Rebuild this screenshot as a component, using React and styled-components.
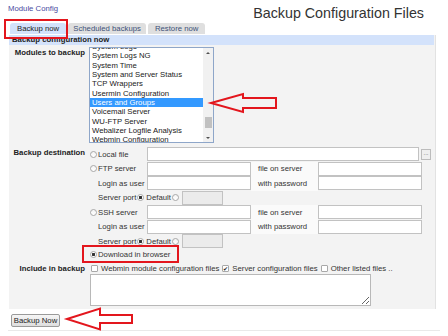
import React from "react";
import styled, { createGlobalStyle } from "styled-components";

const GlobalStyle = createGlobalStyle`
  body {
    margin: 0;
    background: #fff;
    font-family: "Liberation Sans", Arial, sans-serif;
    font-size: 7.75px;
    color: #333;
  }
  * { box-sizing: border-box; }
`;

const RED = "#e3161d";

const Page = styled.div`
  position: relative;
  width: 448px;
  height: 336px;
  overflow: hidden;
`;

const TopBar = styled.div`
  display: flex;
  justify-content: space-between;
  align-items: flex-start;
  height: 23px;
  padding: 0 24px 0 8px;
`;

const ModuleLink = styled.a`
  margin-top: 4px;
  line-height: 9px;
  color: #4a4aa0;
  text-decoration: none;
`;

const Title = styled.div`
  margin-top: 5px;
  font-size: 14.3px;
  line-height: 16px;
  color: #333;
`;

const Tabs = styled.div`
  display: flex;
  gap: 2px;
  margin-left: 10px;
  height: 12px;
`;

const Tab = styled.div`
  position: relative;
  height: 11px;
  margin-top: 0;
  padding: 0 ${(p) => p.$pad}px;
  line-height: 11px;
  border-radius: 3px 3px 0 0;
  background: ${(p) => (p.$active ? "#d3e2fb" : "#dfdfdf")};
  color: ${(p) => (p.$active ? "#222" : "#3d5178")};
  white-space: nowrap;
  ${(p) =>
    p.$marked &&
    `
    &::after {
      content: "";
      position: absolute;
      left: -6px;
      right: -2px;
      top: -4px;
      bottom: -5px;
      border: 2px solid ${RED};
    }
  `}
`;

const Panel = styled.div`
  margin-left: 9px;
  width: 427px;
  background: #f3f3f3;
  border-right: 1px solid #e2e2e2;
  padding-bottom: 3px;
`;

const PanelHeader = styled.div`
  height: 10px;
  line-height: 10px;
  margin-right: 1px;
  padding-left: 3px;
  background: #d3e2fb;
  font-weight: bold;
  color: #222;
`;

const FormGrid = styled.div`
  display: grid;
  grid-template-columns: 80px 1fr;
  align-items: start;
`;

const Label = styled.div`
  text-align: right;
  padding-right: 4px;
  font-weight: bold;
  color: #222;
  white-space: nowrap;
  line-height: ${(p) => p.$lh || 9}px;
  margin-top: ${(p) => p.$mt || 0}px;
`;

const Cell = styled.div`
  margin-top: ${(p) => p.$mt || 0}px;
`;

const ListBox = styled.div`
  display: flex;
  width: 125px;
  height: 96px;
  border: 1px solid #8ea6c9;
  background: #fff;
`;

const List = styled.div`
  flex: 1;
  overflow: hidden;
`;

const ListInner = styled.div`
  margin-top: -6px;
`;

const Item = styled.div`
  height: 9.33px;
  line-height: 9.33px;
  padding-left: 2px;
  white-space: nowrap;
  background: ${(p) => (p.$selected ? "#3399ff" : "transparent")};
  color: ${(p) => (p.$selected ? "#fff" : "#222")};
`;

const ScrollBar = styled.div`
  display: flex;
  flex-direction: column;
  align-items: center;
  width: 10px;
  background: #f1f1f1;
`;

const ScrollArrow = styled.div`
  height: 9px;
  display: flex;
  align-items: center;
  justify-content: center;
  &::before {
    content: "";
    border-left: 2px solid transparent;
    border-right: 2px solid transparent;
    ${(p) => (p.$down ? "border-top" : "border-bottom")}: 2px solid #505050;
  }
`;

const Thumb = styled.div`
  width: 7px;
  height: 11px;
  margin-top: 60px;
  background: #c1c1c1;
`;

const Spacer = styled.div`
  flex: 1;
`;

const DestRow = styled.div`
  display: flex;
  align-items: center;
  height: ${(p) => p.$h || 14.5}px;
`;

const ChoiceCell = styled.div`
  display: flex;
  align-items: center;
  width: 58px;
  padding-left: ${(p) => (p.$indent ? 9 : 1)}px;
  white-space: nowrap;
`;

const SideLabel = styled.div`
  align-self: stretch;
  display: flex;
  align-items: center;
  width: 67px;
  padding-left: 7px;
  background: #fafafa;
  white-space: nowrap;
`;

const TextInput = styled.input`
  width: ${(p) => p.$w}px;
  height: 14px;
  padding: 0;
  margin: 0;
  border: 1px solid #c2c2c2;
  background: ${(p) => (p.disabled ? "#ebebeb" : "#fff")};
  font: inherit;
`;

const DotsButton = styled.div`
  width: 10px;
  height: 11px;
  margin-left: 2px;
  border: 1px solid #bcbcbc;
  background: #efefef;
  font-size: 6px;
  line-height: 7px;
  text-align: center;
  color: #555;
`;

const Radio = styled.span`
  display: inline-block;
  flex: none;
  width: 7px;
  height: 7px;
  margin-right: ${(p) => p.$mr ?? 1}px;
  border-radius: 50%;
  border: 1px solid #a8a8a8;
  background: ${(p) =>
    p.$checked
      ? "radial-gradient(circle, #333 0 1.4px, #fff 1.6px)"
      : "linear-gradient(#f4f4f4, #fff)"};
`;

const Check = styled.span`
  display: inline-flex;
  align-items: center;
  justify-content: center;
  flex: none;
  width: 7px;
  height: 7px;
  border: 1px solid #a8a8a8;
  border-radius: 1px;
  background: #fff;
  font-size: 6px;
  line-height: 1;
  color: #222;
`;

const PortRow = styled.div`
  display: flex;
  align-items: center;
  gap: 1px;
  padding-left: 9px;
  white-space: nowrap;
`;

const Marked = styled.span`
  position: relative;
  display: inline-flex;
  align-items: center;
  margin-left: 1px;
  white-space: nowrap;
  &::after {
    content: "";
    position: absolute;
    left: -8px;
    right: -9px;
    top: -5px;
    bottom: -4px;
    border: 2px solid ${RED};
  }
`;

const IncludeLine = styled.div`
  display: flex;
  align-items: center;
  gap: 3px;
  height: 10px;
  padding-left: 2px;
  white-space: nowrap;
`;

const TextArea = styled.textarea`
  display: block;
  width: 281px;
  height: 32px;
  margin: 0 0 0 1px;
  border: 1px solid #b8b8b8;
  background: #fff;
  resize: both;
`;

const ButtonRow = styled.div`
  margin: 5px 0 0 11px;
`;

const Button = styled.button`
  height: 13px;
  width: 49px;
  padding: 0;
  border: 1px solid #9a9a9a;
  border-radius: 2px;
  background: linear-gradient(#f6f6f6, #dedede);
  font: inherit;
  color: #222;
`;

const Rule = styled.div`
  height: 1px;
  margin: 3px 8px 0;
  background: #e9e9e9;
`;

const ArrowSvg = styled.svg`
  position: absolute;
  left: ${(p) => p.$x}px;
  top: ${(p) => p.$y}px;
  overflow: visible;
`;

const modules = [
  "System Logs",
  "System Logs NG",
  "System Time",
  "System and Server Status",
  "TCP Wrappers",
  "Usermin Configuration",
  "Users and Groups",
  "Voicemail Server",
  "WU-FTP Server",
  "Webalizer Logfile Analysis",
  "Webmin Configuration",
];

function Arrow({ x, y, tipY, headX, headHalf, shaftHalf, endX }) {
  // points relative to the svg origin
  const pts = [
    [0, tipY],
    [headX, tipY - headHalf],
    [headX, tipY - shaftHalf],
    [endX, tipY - shaftHalf],
    [endX, tipY + shaftHalf],
    [headX, tipY + shaftHalf],
    [headX, tipY + headHalf],
  ]
    .map((p) => p.join(","))
    .join(" ");
  return (
    <ArrowSvg $x={x} $y={y} width={endX + 2} height={tipY + headHalf + 2}>
      <polygon
        points={pts}
        fill="none"
        stroke={RED}
        strokeWidth="2"
        strokeLinejoin="miter"
      />
    </ArrowSvg>
  );
}

function ServerRows({ name, side }) {
  return (
    <>
      <DestRow>
        <ChoiceCell>
          <Radio />
          {name}
        </ChoiceCell>
        <TextInput $w={104} />
        <SideLabel>{side[0]}</SideLabel>
        <TextInput $w={104} />
      </DestRow>
      <DestRow>
        <ChoiceCell $indent>Login as user</ChoiceCell>
        <TextInput $w={104} />
        <SideLabel>{side[1]}</SideLabel>
        <TextInput $w={104} />
      </DestRow>
      <DestRow>
        <PortRow>
          Server port <Radio $checked /> Default <Radio $mr={2} />
          <TextInput $w={41} disabled />
        </PortRow>
      </DestRow>
    </>
  );
}

export default function App() {
  return (
    <Page>
      <GlobalStyle />
      <TopBar>
        <ModuleLink href="#">Module Config</ModuleLink>
        <Title>Backup Configuration Files</Title>
      </TopBar>
      <Tabs>
        <Tab $active $marked $pad={7}>
          Backup now
        </Tab>
        <Tab $pad={5}>Scheduled backups</Tab>
        <Tab $pad={7}>Restore now</Tab>
      </Tabs>
      <Panel>
        <PanelHeader>Backup configuration now</PanelHeader>
        <FormGrid>
          <Label $mt={3}>Modules to backup</Label>
          <Cell $mt={2}>
            <ListBox>
              <List>
                <ListInner>
                  {modules.map((m) => (
                    <Item key={m} $selected={m === "Users and Groups"}>
                      {m}
                    </Item>
                  ))}
                </ListInner>
              </List>
              <ScrollBar>
                <ScrollArrow />
                <Thumb />
                <Spacer />
                <ScrollArrow $down />
              </ScrollBar>
            </ListBox>
          </Cell>

          <Label $mt={4} $lh={12}>
            Backup destination
          </Label>
          <Cell $mt={4}>
            <DestRow>
              <ChoiceCell>
                <Radio />
                Local file
              </ChoiceCell>
              <TextInput $w={272} />
              <DotsButton>...</DotsButton>
            </DestRow>
            <ServerRows
              name="FTP server"
              side={["file on server", "with password"]}
            />
            <ServerRows
              name="SSH server"
              side={["file on server", "with password"]}
            />
            <DestRow $h={11}>
              <Marked>
                <Radio $checked />
                Download in browser
              </Marked>
            </DestRow>
          </Cell>

          <Label $mt={4} $lh={10}>
            Include in backup
          </Label>
          <Cell $mt={4}>
            <IncludeLine>
              <Check />
              Webmin module configuration files
              <Check>✔</Check>
              Server configuration files
              <Check />
              Other listed files ..
            </IncludeLine>
            <TextArea />
          </Cell>
        </FormGrid>
      </Panel>
      <ButtonRow>
        <Button>Backup Now</Button>
      </ButtonRow>
      <Rule />

      <Arrow x={211} y={91} tipY={12} headX={32} headHalf={9} shaftHalf={5} endX={65} />
      <Arrow x={67} y={306} tipY={13} headX={33} headHalf={10.5} shaftHalf={4} endX={65} />
    </Page>
  );
}
